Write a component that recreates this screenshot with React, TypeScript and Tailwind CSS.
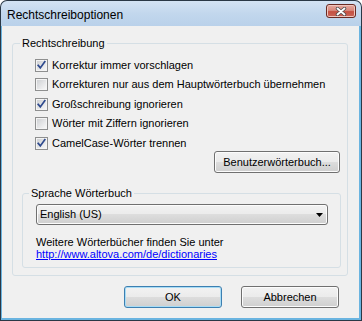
import React from "react";

function CheckBox({ checked }: { checked: boolean }) {
  return (
    <svg width="13" height="13" viewBox="0 0 13 13" className="shrink-0 block">
      <defs>
        <linearGradient id="cbg" x1="0" y1="0" x2="1" y2="1">
          <stop offset="0" stopColor="#cfd1d4" />
          <stop offset="1" stopColor="#f7f7f7" />
        </linearGradient>
      </defs>
      <rect x="0.5" y="0.5" width="12" height="12" fill="#f4f4f4" stroke="#8e8f8f" />
      <rect x="2" y="2" width="9" height="9" fill="url(#cbg)" />
      {checked && (
        <path d="M3.2 6.4 L5.3 8.9 L9.8 2.8" fill="none" stroke="#2e4a8e" strokeWidth="1.7" strokeLinecap="square" />
      )}
    </svg>
  );
}

function Btn({ children, w, def }: { children: React.ReactNode; w: string; def?: boolean }) {
  return (
    <div
      className={
        "h-[22px] rounded-[3px] border flex items-center justify-center text-[11px] text-black " +
        w +
        (def
          ? " border-[#3c7fb1] shadow-[inset_0_0_0_1px_#a8dcf5]"
          : " border-[#707070] shadow-[inset_0_0_0_1px_#fcfcfc]") +
        " bg-[linear-gradient(to_bottom,#f2f2f2_0%,#ebebeb_50%,#dddddd_50%,#cfcfcf_100%)]"
      }
    >
      {children}
    </div>
  );
}

const rows: { label: string; checked: boolean; mt: string }[] = [
  { label: "Korrektur immer vorschlagen", checked: true, mt: "mt-0" },
  { label: "Korrekturen nur aus dem Hauptwörterbuch übernehmen", checked: false, mt: "mt-[6px]" },
  { label: "Großschreibung ignorieren", checked: true, mt: "mt-[7px]" },
  { label: "Wörter mit Ziffern ignorieren", checked: false, mt: "mt-[6px]" },
  { label: "CamelCase-Wörter trennen", checked: true, mt: "mt-[7px]" },
];

export default function App() {
  return (
    <div className="w-[362px] h-[321px] bg-[#2a3846] rounded-t-[7px] p-[1px] flex flex-col font-['Liberation_Sans',Arial,sans-serif] text-black">
      {/* Title bar */}
      <div className="h-[25px] rounded-t-[6px] bg-[linear-gradient(to_bottom,#d3e3f3_0%,#c2d7ed_50%,#b9d1ea_100%)] flex items-start justify-between pl-[6px] pr-[5px]">
        <span className="text-[12px] leading-[14px] mt-[7px]">Rechtschreiboptionen</span>
        <div className="mt-[3px] w-[30px] h-[14px] rounded-[3px] border border-[#6a2a22] bg-[linear-gradient(to_bottom,#e6aaa0_0%,#d88a7e_45%,#c55142_55%,#c9665a_100%)] shadow-[inset_0_0_0_1px_#efc6be] flex items-center justify-center">
          <svg width="12" height="9" viewBox="0 0 12 9">
            <path d="M2.5 1.5 L9.5 7.5 M9.5 1.5 L2.5 7.5" stroke="#4a4a4a" strokeWidth="3.4" strokeLinecap="round" />
            <path d="M2.5 1.5 L9.5 7.5 M9.5 1.5 L2.5 7.5" stroke="#ffffff" strokeWidth="1.9" strokeLinecap="round" />
          </svg>
        </div>
      </div>
      {/* Frame */}
      <div className="flex-1 bg-[#6ab4e0] pl-[1px] pr-[2px] pb-[2px] flex">
        <div className="flex-1 bg-[#f0f0f0] pt-[17px] pl-[10px] flex flex-col text-[11px]">
          {/* Outer group */}
          <div className="relative w-[336px] h-[233px] border border-[#d5dfe5] rounded-[3px] flex flex-col">
            <span className="absolute left-[7px] top-[-7px] px-[2px] bg-[#f0f0f0] leading-[13px]">Rechtschreibung</span>
            <div className="pl-[22px] pt-[15px] flex flex-col">
              {rows.map((r) => (
                <div key={r.label} className={"h-[13px] flex items-center " + r.mt}>
                  <CheckBox checked={r.checked} />
                  <span className="ml-[4px] leading-[13px] whitespace-nowrap">{r.label}</span>
                </div>
              ))}
            </div>
            <div className="flex justify-end pr-[7px] mt-[1px]">
              <Btn w="w-[126px]">Benutzerwörterbuch...</Btn>
            </div>
            {/* Inner group */}
            <div className="relative mt-[20px] ml-[9px] w-[319px] h-[75px] border border-[#d5dfe5] rounded-[3px] pl-[13px] pt-[10px] flex flex-col">
              <span className="absolute left-[6px] top-[-7px] px-[2px] bg-[#f0f0f0] leading-[13px]">Sprache Wörterbuch</span>
              <div className="w-[292px] h-[21px] rounded-[3px] border border-[#707070] shadow-[inset_0_0_0_1px_#fcfcfc] bg-[linear-gradient(to_bottom,#f2f2f2_0%,#ebebeb_50%,#dddddd_50%,#cfcfcf_100%)] flex items-center justify-between pl-[3px] pr-[4px]">
                <span className="leading-[13px]">English (US)</span>
                <svg width="7" height="4" viewBox="0 0 7 4">
                  <path d="M0 0 H7 L3.5 4 Z" fill="#000" />
                </svg>
              </div>
              <div className="mt-[11px] leading-[12px]">Weitere Wörterbücher finden Sie unter</div>
              <div className="leading-[12px]">
                <span className="text-[#0000ff] underline">http://www.altova.com/de/dictionaries</span>
              </div>
            </div>
          </div>
          {/* Bottom buttons */}
          <div className="mt-[10px] flex justify-end gap-[19px] pr-[20px]">
            <Btn w="w-[98px]" def>
              OK
            </Btn>
            <Btn w="w-[98px]">Abbrechen</Btn>
          </div>
        </div>
      </div>
    </div>
  );
}
